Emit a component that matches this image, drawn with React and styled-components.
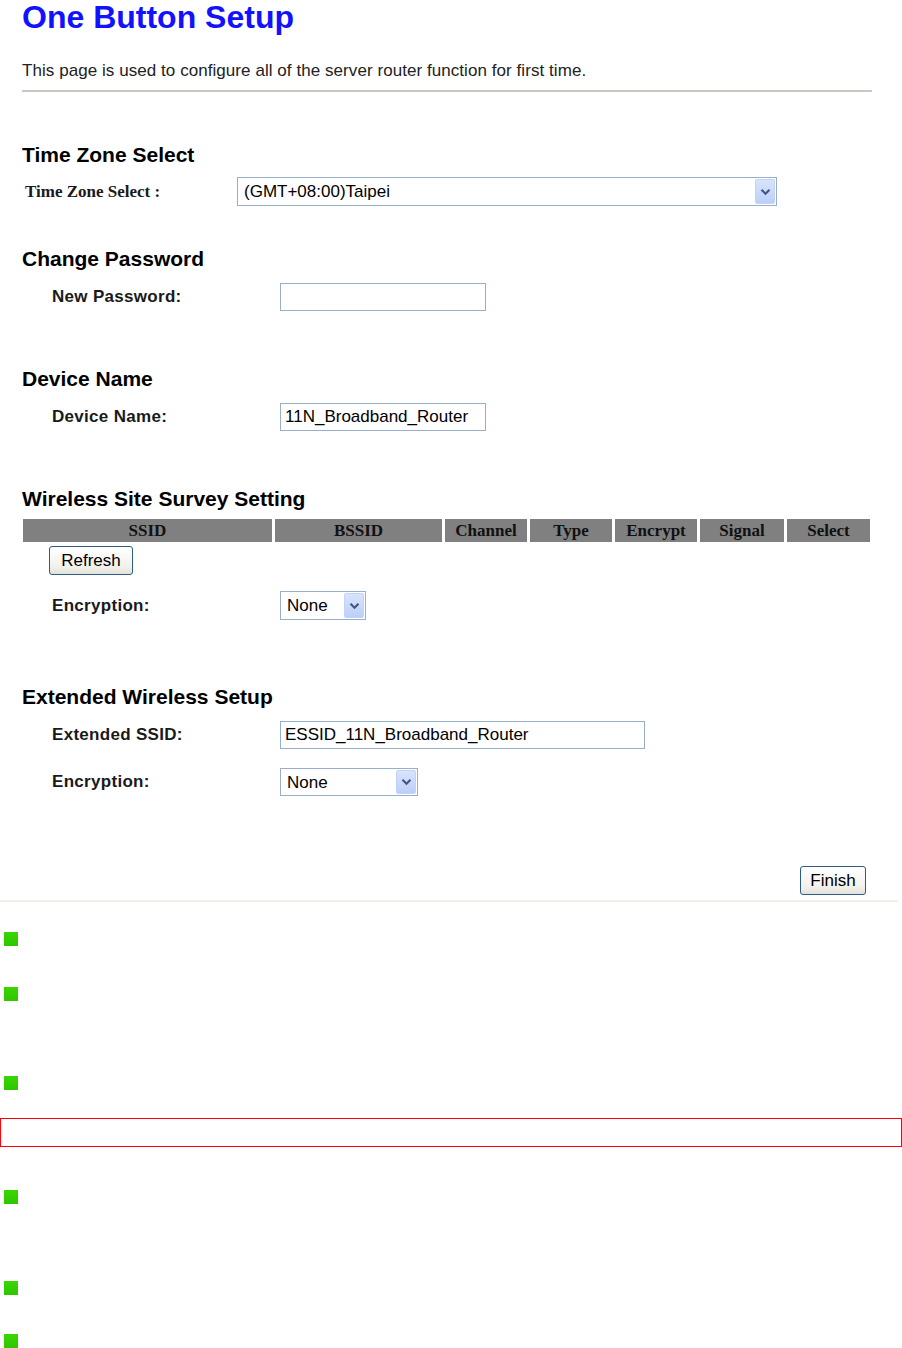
import React from 'react';
import styled, { createGlobalStyle } from 'styled-components';

const GlobalStyle = createGlobalStyle`
  body {
    margin: 0;
    background: #fff;
    font-family: 'Liberation Sans', Arial, sans-serif;
    color: #000;
  }
`;

const Page = styled.div`
  width: 902px;
`;

const Form = styled.div`
  width: 850px;
  padding-left: 22px;
`;

const Title = styled.h1`
  margin: 0;
  font-size: 32px;
  line-height: 34px;
  font-weight: bold;
  color: #1212ff;
`;

const Intro = styled.p`
  margin: 27px 0 0;
  font-size: 17px;
  line-height: 20px;
  letter-spacing: 0.06px;
  color: #222;
`;

const Rule = styled.div`
  margin-top: 9px;
  height: 2px;
  background: #cac6c0;
`;

const SectionTitle = styled.h2`
  margin: ${(p) => p.$top}px 0 0;
  font-size: 21px;
  line-height: 24px;
  font-weight: bold;
  color: #000;
`;

const Row = styled.div`
  display: grid;
  grid-template-columns: ${(p) => p.$label}px auto;
  justify-content: start;
  align-items: center;
  margin-top: ${(p) => p.$top}px;
  padding-left: ${(p) => p.$indent}px;
`;

const Label = styled.span`
  font-size: 17px;
  line-height: 20px;
  font-weight: bold;
  color: #1a1a1a;
  letter-spacing: ${(p) => (p.$serif ? 0 : 0.3)}px;
  font-family: ${(p) =>
    p.$serif ? "'Liberation Serif', 'Times New Roman', serif" : "'Liberation Sans', Arial, sans-serif"};
`;

const TextBox = styled.div`
  box-sizing: border-box;
  width: ${(p) => p.$width}px;
  height: 28px;
  border: 1px solid #98afc9;
  padding: 0 4px;
  font-size: 17px;
  line-height: 26px;
  white-space: nowrap;
  overflow: hidden;
`;

const SelectBox = styled.div`
  box-sizing: border-box;
  display: flex;
  align-items: stretch;
  width: ${(p) => p.$width}px;
  height: ${(p) => p.$height}px;
  border: 1px solid #98afc9;
  padding: 1px;
  background: #fff;
`;

const SelectValue = styled.span`
  flex: 1;
  padding-left: 5px;
  font-size: 17px;
  line-height: 25px;
  white-space: nowrap;
`;

const DropButton = styled.span`
  box-sizing: border-box;
  width: 20px;
  display: flex;
  align-items: center;
  justify-content: center;
  border: 1px solid #c3d3f7;
  border-radius: 2px;
  background: linear-gradient(#d8e4fd, #bccff8);
`;

const SurveyHead = styled.div`
  display: grid;
  grid-template-columns: 249px 167px 82px 82px 82px 84px 83px;
  gap: 3px;
  margin: 8px 0 0 1px;
`;

const HeadCell = styled.div`
  height: 23px;
  background: #808080;
  text-align: center;
  font-family: 'Liberation Serif', 'Times New Roman', serif;
  font-size: 17px;
  font-weight: bold;
  line-height: 23px;
  color: #111;
`;

const XPButton = styled.button`
  box-sizing: border-box;
  width: ${(p) => p.$width}px;
  height: 29px;
  padding: 0;
  border: 1px solid #2b5c8a;
  border-radius: 3px;
  background: linear-gradient(#ffffff, #f3f2ed 70%, #e3e1d8);
  font-family: 'Liberation Sans', Arial, sans-serif;
  font-size: 17px;
  color: #000;
`;

const RefreshWrap = styled.div`
  margin: 4px 0 0 27px;
`;

const Actions = styled.div`
  display: flex;
  justify-content: flex-end;
  margin-top: 70px;
  padding-right: 6px;
`;

const Divider = styled.div`
  margin-top: 5px;
  width: 898px;
  height: 2px;
  background: #f4efe6;
`;

const Notes = styled.ul`
  list-style: none;
  margin: 30px 0 0;
  padding: 0;
`;

const NoteItem = styled.li`
  height: ${(p) => p.$h}px;
`;

const Bullet = styled.span`
  display: block;
  width: 14px;
  height: 14px;
  margin-left: 4px;
  background: linear-gradient(#3ad600, #2fc500);
`;

const Callout = styled.li`
  box-sizing: border-box;
  width: 902px;
  height: 29px;
  margin-bottom: 43px;
  border: 1px solid #f00;
`;

const Chevron = () => (
  <svg width="11" height="8" viewBox="0 0 11 8">
    <path d="M1.5 1.8 L5.5 5.8 L9.5 1.8" fill="none" stroke="#44587f" strokeWidth="2.2" />
  </svg>
);

const Select = ({ value, width, height = 29 }) => (
  <SelectBox $width={width} $height={height}>
    <SelectValue>{value}</SelectValue>
    <DropButton>
      <Chevron />
    </DropButton>
  </SelectBox>
);

const columns = ['SSID', 'BSSID', 'Channel', 'Type', 'Encrypt', 'Signal', 'Select'];
const notes = [55, 89, 42, 'callout', 91, 53, 14];

const App = () => (
  <Page>
    <GlobalStyle />
    <Form>
      <Title>One Button Setup</Title>
      <Intro>This page is used to configure all of the server router function for first time.</Intro>
      <Rule />

      <SectionTitle $top={51}>Time Zone Select</SectionTitle>
      <Row $top={10} $indent={3} $label={212}>
        <Label $serif>Time Zone Select :</Label>
        <Select value="(GMT+08:00)Taipei" width={540} />
      </Row>

      <SectionTitle $top={41}>Change Password</SectionTitle>
      <Row $top={12} $indent={30} $label={228}>
        <Label>New Password:</Label>
        <TextBox $width={206} />
      </Row>

      <SectionTitle $top={56}>Device Name</SectionTitle>
      <Row $top={12} $indent={30} $label={228}>
        <Label>Device Name:</Label>
        <TextBox $width={206}>11N_Broadband_Router</TextBox>
      </Row>

      <SectionTitle $top={56}>Wireless Site Survey Setting</SectionTitle>
      <SurveyHead>
        {columns.map((c) => (
          <HeadCell key={c}>{c}</HeadCell>
        ))}
      </SurveyHead>
      <RefreshWrap>
        <XPButton $width={84}>Refresh</XPButton>
      </RefreshWrap>
      <Row $top={16} $indent={30} $label={228}>
        <Label>Encryption:</Label>
        <Select value="None" width={86} />
      </Row>

      <SectionTitle $top={65}>Extended Wireless Setup</SectionTitle>
      <Row $top={12} $indent={30} $label={228}>
        <Label>Extended SSID:</Label>
        <TextBox $width={365}>ESSID_11N_Broadband_Router</TextBox>
      </Row>
      <Row $top={19} $indent={30} $label={228}>
        <Label>Encryption:</Label>
        <Select value="None" width={138} height={28} />
      </Row>

      <Actions>
        <XPButton $width={66}>Finish</XPButton>
      </Actions>
    </Form>
    <Divider />
    <Notes>
      {notes.map((n, i) =>
        n === 'callout' ? (
          <Callout key={i} />
        ) : (
          <NoteItem key={i} $h={n}>
            <Bullet />
          </NoteItem>
        )
      )}
    </Notes>
  </Page>
);

export default App;
